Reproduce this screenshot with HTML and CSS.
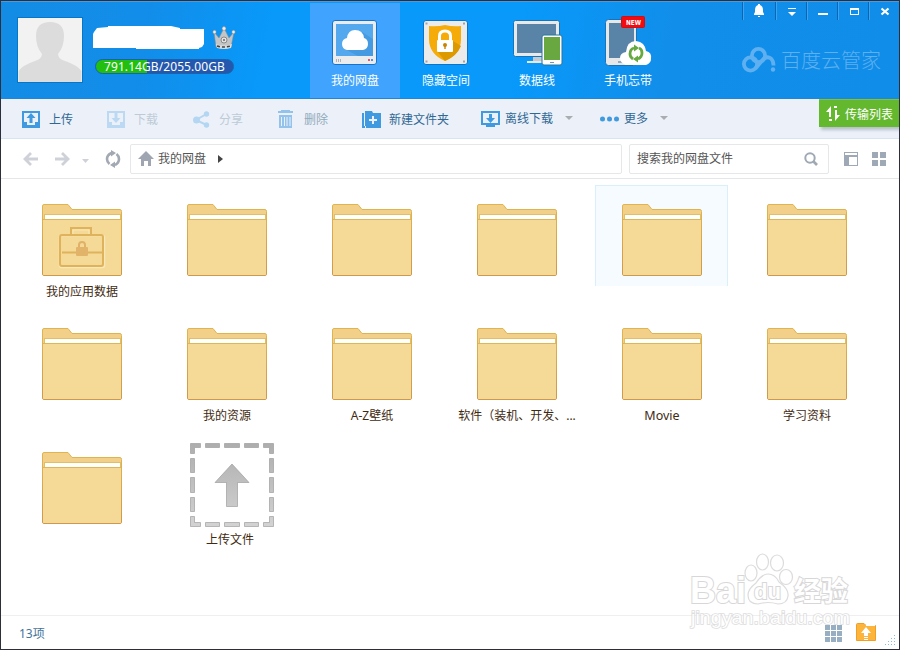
FILE: index.html
```html
<!DOCTYPE html>
<html lang="zh-CN">
<head>
<meta charset="utf-8">
<title>百度云管家</title>
<link rel="stylesheet" href="styles.css">
</head>
<body>
<svg class="defs" width="0" height="0" aria-hidden="true">
  <defs>
    <linearGradient id="edge" x1="0" y1="0" x2="0" y2="1"><stop offset="0" stop-color="#e0b54f"/><stop offset="1" stop-color="#cd994c"/></linearGradient>
    <linearGradient id="gray" gradientUnits="userSpaceOnUse" x1="0" y1="0" x2="0" y2="84"><stop offset="0" stop-color="#adadad"/><stop offset="1" stop-color="#d3d3d3"/></linearGradient>
    <symbol id="folder" viewBox="0 0 80 72">
      <path d="M.5 70V2Q.5.5 2 .5H26L30 5.500H78Q79.500 5.500 79.500 7.500V70Q79.500 71.500 78 71.500H2Q.5 71.500.5 70Z" fill="#f2d08a" stroke="url(#edge)"/>
      <path d="M1 16H79V70Q79 71 78 71H2Q1 71 1 70Z" fill="#f5d997"/>
      <rect x="2.500" y="10.500" width="76" height="5" fill="#fff" stroke="#e2bf66"/>
      <path d="M1 15.500H79" stroke="#dfb655"/>
    </symbol>
  </defs>
</svg>
<div class="window">
  <header class="header">
    <svg class="avatar" width="66" height="66" viewBox="0 0 66 66"><rect x=".5" y=".5" width="65" height="65" fill="#f2f2f2" stroke="#0876c6"/><path d="M1.500 65V54Q6 48 18 44Q25 42 25 37Q19 30 19 19Q19 5 33 5Q47 5 47 19Q47 30 41 37Q41 42 48 44Q60 48 64.500 54V65Z" fill="#dcdcdc"/></svg>
    <div class="account">
      <div class="name-row">
        <svg width="112" height="24" viewBox="0 0 112 24"><path d="M1 6L4 2L15 1V0H78L87 2V3H111V18L109 21L106 22V23H43V22H0V8Z" fill="#fff"/></svg>
        <svg class="crown" width="24" height="24" viewBox="0 0 24 24"><path d="M2 6L7 12L12 2L17 12L22 6L19 21Q12 24 4 21Z" fill="#c3c5c7" stroke="#8a8a8a" stroke-width=".5"/><path d="M4 18Q12 21 20 18L19 22Q12 24 5 22Z" fill="#ddd"/><path d="M5 20Q12 22 19 20" stroke="#444" stroke-dasharray="3 2" stroke-width="1.500" fill="none"/><circle cx="12" cy="14" r="3" fill="#e4e4e4" stroke="#777" stroke-width=".8"/><circle cx="12" cy="14" r="1" fill="#666"/><g fill="#eee" stroke="#888" stroke-width=".5"><circle cx="2.500" cy="6" r="1.700"/><circle cx="12" cy="2.500" r="1.900"/><circle cx="21.500" cy="6" r="1.700"/></g></svg>
      </div>
      <div class="quota">791.14GB/2055.00GB</div>
    </div>
    <nav class="tabs">
      <div class="tab active">
        <svg width="60" height="54" viewBox="0 0 60 54"><rect x="7.500" y="6.500" width="44" height="44" rx="2.500" fill="#eaecee" stroke="#1773c9"/><rect x="11" y="10" width="37" height="32" fill="#53a8ee"/><path d="M37 18L48 25V42H33L18 34Z" fill="#459ae2"/><path d="M22 36Q17 35 17 30Q17 25 22 24Q23 16 30 16Q38 16 39 24Q43 25 43 30Q43 35 38 36Z" fill="#fff"/><path d="M11.500 45V48M13.500 45V48M15.500 45V48" stroke="#b0b2b5"/><path d="M43 45H45V47H43Z" fill="#e8556c"/><path d="M46 45H48V47H46Z" fill="#4b97dc"/></svg>
        <span>我的网盘</span>
      </div>
      <div class="tab">
        <svg width="60" height="54" viewBox="0 0 60 54"><rect x="7.500" y="6.500" width="44" height="44" rx="2.500" fill="#ebebeb" stroke="#0a74cc"/><path d="M9.500 9.500h2M47 9.500h2M9.500 47.500h2M47 47.500h2" stroke="#a0a4a8" stroke-width="2"/><g transform="translate(-1)"><path d="M14 12Q22 13 30 11Q38 13 46 12V25Q46 40 30 47Q14 40 14 25Z" fill="#f5ab08"/><path d="M38 27L46 32Q42 42 30 47L22 37Z" fill="#dd9900"/><path d="M24.500 27V22Q24.500 17 30 17Q35.500 17 35.500 22V27" fill="none" stroke="#fff" stroke-width="3"/><rect x="22" y="26" width="16" height="12" rx="1" fill="#fff"/><circle cx="30" cy="31" r="2" fill="#c98500"/><path d="M29.300 31h1.400v4h-1.400Z" fill="#c98500"/></g></svg>
        <span>隐藏空间</span>
      </div>
      <div class="tab">
        <svg width="60" height="54" viewBox="0 0 60 54"><g transform="translate(-1)"><path d="M27 42H38V47H43V49H21V47H27Z" fill="#c6cbd0"/><path d="M21 47H43V49H21Z" fill="#e8e8e8"/><rect x="7.500" y="6.500" width="46" height="36" rx="2" fill="#e8e9ea" stroke="#1674bd"/><rect x="11" y="10" width="39" height="29" fill="#5984a8"/><rect x="36" y="21" width="20" height="30" rx="2" fill="#fff" stroke="#26769d"/><rect x="38" y="23" width="16" height="23" fill="#69a840"/><path d="M44 48.500h4" stroke="#7197b5"/></g></svg>
        <span>数据线</span>
      </div>
      <div class="tab">
        <svg width="60" height="54" viewBox="0 0 60 54"><rect x="7.500" y="5.500" width="31" height="46" rx="3" fill="#e5e7e9" stroke="#1674bd"/><rect x="11" y="9" width="25" height="35" fill="#5984a8"/><path d="M20 48h5" stroke="#7197b5" stroke-width="1.500"/><path d="M28 51Q22 49 22 44Q22 39 28 38Q29 27 38 27Q47 28 48 37Q54 38 53 45Q53 49 48 51Z" fill="#fff"/><g fill="none" stroke="#65a940" stroke-width="2.800"><path d="M36 34Q32 35 32 40Q32 43 35 45"/><path d="M40 45Q44 43 44 39Q44 35 41 34"/></g><path d="M36 30.500L41 34L36 37.500ZM40 48.500L35 45L40 41.500Z" fill="#65a940"/><rect x="23.500" y="2.500" width="23" height="11" rx="1" fill="#f40b12" stroke="#cc1016"/><text x="35.500" y="10.500" text-anchor="middle" class="new" textLength="15" lengthAdjust="spacingAndGlyphs">NEW</text></svg>
        <span>手机忘带</span>
      </div>
    </nav>
    <div class="right">
      <div class="controls">
        <i><svg width="16" height="16" viewBox="0 0 16 16"><path d="M7 1H9V2Q12 3 12 7V9L13 11V12H3V11L4 9V7Q4 3 7 2ZM7 13H9V14H7Z"/></svg></i>
        <i><svg width="16" height="16" viewBox="0 0 16 16"><path d="M4 4H12V5H4ZM4 8H12L8 12Z"/></svg></i>
        <i><svg width="16" height="16" viewBox="0 0 16 16"><path d="M3 9H13V11H3Z"/></svg></i>
        <i><svg width="16" height="16" viewBox="0 0 16 16"><path fill-rule="evenodd" d="M4 4H13V11H4ZM5 6V10H12V6Z"/></svg></i>
        <i><svg width="16" height="16" viewBox="0 0 16 16"><path d="M4.500 4.500L11.500 10.500M11.500 4.500L4.500 10.500" stroke="#fff" stroke-width="2.200"/></svg></i>
      </div>
      <div class="brand">
        <svg width="34" height="26" viewBox="0 0 34 26" fill="none" stroke="#5eb0f0" stroke-width="3.800"><circle cx="8.500" cy="17" r="6.600"/><circle cx="16.500" cy="8.500" r="6.600"/><path d="M13.500 21.500L21 12.500Q25 8.500 29 11.500Q31.500 14 31.500 18.500"/><circle cx="31" cy="22.500" r="2.200" fill="#5eb0f0" stroke="none"/></svg>
        <span>百度云管家</span>
      </div>
    </div>
  </header>

  <div class="toolbar">
    <div class="tool t-upload"><svg width="18" height="17" viewBox="0 0 18 17" fill="#3f9adf"><path fill-rule="evenodd" d="M0 0H18V17H0ZM2 2V11H5V14H13V11H16V2Z"/><path d="M9 2L13.500 7H10.500V12H7.500V7H4.500Z"/></svg><span>上传</span></div>
    <div class="tool t-down off"><svg width="18" height="17" viewBox="0 0 18 17" fill="#bbd9f2"><path fill-rule="evenodd" d="M0 0H18V17H0ZM2 2V11H5V14H13V11H16V2Z"/><path d="M9 12L13.500 7H10.500V2H7.500V7H4.500Z"/></svg><span>下载</span></div>
    <div class="tool t-share off"><svg width="17" height="17" viewBox="0 0 17 17" fill="#b3d6f2"><path d="M13.500 3L3 9L13.500 14" fill="none" stroke="#b3d6f2" stroke-width="2"/><circle cx="3.500" cy="9" r="3.500"/><circle cx="13.500" cy="3" r="2.700"/><circle cx="13.500" cy="14" r="2.700"/></svg><span>分享</span></div>
    <div class="tool t-del dim"><svg width="15" height="18" viewBox="0 0 15 18" fill="#93c3eb"><path fill-rule="evenodd" d="M3 0H12V1H15V3H0V1H3ZM1 5H14V18H1ZM3 7V16H4V7ZM6 7V16H7V7ZM8.500 7V16H9.500V7ZM11.500 7V16H12.500V7Z"/></svg><span>删除</span></div>
    <div class="tool t-new"><svg width="19" height="17" viewBox="0 0 19 17" fill="#3f9adf"><path fill-rule="evenodd" d="M0 2H2V15H4V17H0ZM3 0H10L11 2H19V17H3ZM10 5V8H7V10H10V13H12V10H15V8H12V5Z"/></svg><span>新建文件夹</span></div>
    <div class="tool t-off"><svg width="19" height="17" viewBox="0 0 19 17" fill="#3f9adf"><path fill-rule="evenodd" d="M0 0H19V14H14V16H5V14H0ZM2 2V12H17V2Z"/><path d="M8 3H11V7H14L9.500 12L5 7H8Z"/></svg><span>离线下载</span><b class="caret"></b></div>
    <div class="tool t-more"><svg width="19" height="17" viewBox="0 0 19 17" fill="#3f9adf"><circle cx="2.500" cy="8" r="2.500"/><circle cx="9.500" cy="8" r="2.500"/><circle cx="16.500" cy="8" r="2.500"/></svg><span>更多</span><b class="caret"></b></div>
    <div class="transfer"><svg width="14" height="15" viewBox="0 0 14 15" fill="#fff"><path d="M5 0V11H3V6H0ZM9 15V4H11V9H14ZM3 13H6V15H3ZM8 0H11V2H8Z"/></svg><span>传输列表</span></div>
  </div>

  <div class="address">
    <svg class="nav" width="100" height="20" viewBox="0 0 100 20"><g fill="none" stroke="#cfd1d8" stroke-width="2.800"><path d="M2 10H15M8 4L2 10L8 16M32 10H45M39 4L45 10L39 16"/></g><path d="M59 10H66L62.500 14Z" fill="#cfd1d8"/><g fill="none" stroke="#a2a9b3" stroke-width="2.600"><path d="M88.500 4Q84 6 84 10Q84 13 86.500 15M92 16Q96 14 96 10Q96 7 93.500 5"/></g><path d="M88 1L93 4L88 7.500ZM92 19L87 16L92 12.500Z" fill="#a2a9b3"/></svg>
    <div class="path"><svg width="16" height="15" viewBox="0 0 16 15"><path d="M8 0L16 8H13V15H10V10H6V15H3V8H0Z" fill="#9fa6b1"/></svg><span>我的网盘</span><b class="arrow"></b></div>
    <div class="search"><span>搜索我的网盘文件</span><svg width="14" height="14" viewBox="0 0 14 14" fill="none" stroke="#9fa9b4" stroke-width="2"><circle cx="6" cy="6" r="4.700"/><path d="M9 9L13 13" stroke-width="2.600"/></svg></div>
    <svg class="views" width="44" height="14" viewBox="0 0 44 14" fill="#9fa9b5"><path fill-rule="evenodd" d="M0 0H14V14H0ZM1 1V3H13V1ZM5 5V13H13V5Z"/><path d="M28 0H34V6H28ZM36 0H42V6H36ZM28 8H34V14H28ZM36 8H42V14H36Z"/></svg>
  </div>

  <main class="files">
    <div class="file"><svg width="80" height="72" viewBox="0 0 80 72"><use href="#folder" width="80" height="72"/><g fill="none" stroke="#fae8b8" stroke-width="1.500"><rect x="17.500" y="31.500" width="45" height="32" rx="2"/></g><g fill="none" stroke="#dfb35c" stroke-width="2"><rect x="18" y="31" width="43" height="31" rx="2"/><path d="M29 31V24H49V31M20 48.500H60"/></g><path d="M31 30V26H47V30" fill="none" stroke="#fae8b8"/><path d="M37 44V41Q37 38 40 38Q43 38 43 41V44" fill="none" stroke="#dfb268" stroke-width="2"/><rect x="34" y="43" width="12" height="9" rx="1" fill="#e1b46a"/></svg><span>我的应用数据</span></div>
    <div class="file"><svg width="80" height="72"><use href="#folder"/></svg></div>
    <div class="file"><svg width="80" height="72"><use href="#folder"/></svg></div>
    <div class="file"><svg width="80" height="72"><use href="#folder"/></svg></div>
    <div class="file hover"><svg width="80" height="72"><use href="#folder"/></svg></div>
    <div class="file"><svg width="80" height="72"><use href="#folder"/></svg></div>
    <div class="file"><svg width="80" height="72"><use href="#folder"/></svg></div>
    <div class="file"><svg width="80" height="72"><use href="#folder"/></svg><span>我的资源</span></div>
    <div class="file"><svg width="80" height="72"><use href="#folder"/></svg><span>A-Z壁纸</span></div>
    <div class="file"><svg width="80" height="72"><use href="#folder"/></svg><span>软件（装机、开发、...</span></div>
    <div class="file"><svg width="80" height="72"><use href="#folder"/></svg><span class="latin">Movie</span></div>
    <div class="file"><svg width="80" height="72"><use href="#folder"/></svg><span>学习资料</span></div>
    <div class="file"><svg width="80" height="72"><use href="#folder"/></svg></div>
    <div class="file upload"><svg width="84" height="84" viewBox="0 0 84 84" fill="url(#gray)" stroke="#999" stroke-opacity=".65"><path d="M.5.5H10.500V4.500H4.500V10.500H.5ZM73.500.5H83.500V10.500H79.500V4.500H73.500ZM.5 73.500H4.500V79.500H10.500V83.500H.5ZM79.500 73.500H83.500V83.500H73.500V79.500H79.500ZM15.500.5h14v4h-14zM34.500.5h15v4h-15zM54.500.5h14v4h-14zM15.500 79.500h14v4h-14zM34.500 79.500h15v4h-15zM54.500 79.500h14v4h-14zM.5 15.500h4v14h-4zM.5 34.500h4v15h-4zM.5 54.500h4v14h-4zM79.500 15.500h4v14h-4zM79.500 34.500h4v15h-4zM79.500 54.500h4v14h-4zM42 21L59 39.500H47.500V63.500H36.500V39.500H25Z"/></svg><span>上传文件</span></div>
  </main>

  <footer class="footer">
    <span>13项</span>
    <svg class="status" width="72" height="22" viewBox="0 0 72 22"><path d="M0 2h5v5H0zM6 2h5v5H6zM12 2h5v5h-5zM0 8h5v5H0zM6 8h5v5H6zM12 8h5v5h-5zM0 14h5v5H0zM6 14h5v5H6zM12 14h5v5h-5z" fill="#98aec2"/><path d="M31.500 1.500Q31.500.5 32.500.5H39L41 2.500H50.500V17.500H31.500Z" fill="#fdb43b" stroke="#ef9f28"/><path d="M41 2.500H50" stroke="#fff"/><path d="M41 4L46 10H43V13H39V10H36ZM39 14H43V15H39ZM39 16H43V17H39Z" fill="#fff"/><path d="M69 12h1v1h-1zM66 15h1v1h-1zM69 15h1v1h-1zM63 18h1v1h-1zM66 18h1v1h-1zM69 18h1v1h-1zM60 21h1v1h-1zM63 21h1v1h-1zM66 21h1v1h-1zM69 21h1v1h-1z" fill="#86bde0"/></svg>
  </footer>
  <svg class="watermark" width="170" height="80" viewBox="0 0 170 80">
    <g fill="#fff" stroke="#d4d4d4" stroke-width="1.200"><ellipse cx="66" cy="23" rx="6" ry="8"/><ellipse cx="77.500" cy="12" rx="6" ry="8"/><ellipse cx="92" cy="13" rx="6.500" ry="8"/><ellipse cx="101" cy="27" rx="6.500" ry="7.500"/><path d="M83 24Q90 24 94 32Q104 39 103 46Q102 54 93 54Q83 51 73 54Q63 54 63 45Q63 39 71 33Q77 24 83 24Z"/></g>
    <g class="outline">
      <text x="5" y="53" font-size="36" textLength="56" lengthAdjust="spacingAndGlyphs">Bai</text>
      <text x="69" y="49" font-size="22" textLength="27" lengthAdjust="spacingAndGlyphs">du</text>
      <text x="109" y="51" font-size="27">经验</text>
      <text class="url" x="6" y="74" font-size="19" textLength="159" lengthAdjust="spacingAndGlyphs">jingyan.baidu.com</text>
    </g>
  </svg>
</div>
</body>
</html>
```
FILE: styles.css
```css
* { box-sizing: border-box; }
body { margin: 0; font: 12px/18px "Noto Sans", "Noto Sans CJK SC", sans-serif; color: #333; }
svg { display: block; flex: none; }
.defs { position: absolute; }
.window { position: relative; display: flex; flex-direction: column; width: 900px; height: 650px; border: 1px solid #2c2e3c; background: #fff; overflow: hidden; }

.header { display: flex; height: 98px; flex: none; border-top: 1px solid #459ce2; border-bottom: 1px solid #2485d2; background: linear-gradient(100deg, #138ce5 0, #128de9 16%, #0899fa 30%, #0899fa 57%, #118eea 74%, #108de8 100%); }
.avatar { margin: 15px 0 0 16px; }
.account { width: 227px; padding: 24px 0 0 10px; }
.name-row { display: flex; gap: 7px; }
.quota { width: 139px; height: 15px; margin: 9px 0 0 2px; border: 1px solid #1a62a9; border-radius: 8px; background: linear-gradient(90deg, #22bf10 0 37%, #2458ae 37%); color: #fff; font-size: 12px; line-height: 14px; text-align: center; letter-spacing: 0.08px; white-space: nowrap; }
.tabs { display: flex; gap: 1px; padding-top: 1px; }
.tab { display: flex; flex-direction: column; align-items: center; width: 90px; height: 95px; padding-top: 11px; color: #fff; }
.tab span { margin-top: 4px; }
.active { background: #40a4fe; }
.new { font: bold 7px "DejaVu Sans", sans-serif; fill: #fff; }
.right { display: flex; flex-direction: column; align-items: flex-end; flex: 1; }
.controls { display: flex; height: 18px; }
.controls i { display: flex; justify-content: center; width: 31px; padding: 2px 0 0 2px; border-left: 1px solid #0866b5; box-shadow: inset 1px 0 #3ba4f0; }
.controls i:first-child { width: 33px; padding: 1px 0 0; }
.controls svg { fill: #fff; }
.brand { display: flex; align-items: center; gap: 5px; margin: 25px 18px 0 0; height: 30px; color: #5eb0f0; font: 300 20px/28px "Noto Sans CJK SC", sans-serif; }

.toolbar { display: flex; height: 40px; flex: none; padding-left: 21px; border-bottom: 1px solid #d5e5f2; background: #ecf1f9; color: #306894; }
.tool { display: flex; align-items: center; gap: 9px; height: 40px; }
.tool span, .transfer span { padding-top: 2px; }
.t-down { margin-left: 34px; }
.t-share { margin-left: 35px; }
.t-del { margin-left: 35px; gap: 11px; }
.t-new { margin-left: 34px; gap: 8px; }
.t-off { margin-left: 32px; gap: 5px; }
.t-more { margin-left: 27px; gap: 5px; }
.t-off span, .t-more span { padding-top: 0; }
.off { color: #bdcbd7; }
.dim { color: #91aabd; }
.caret { margin: 0 0 2px 7px; border: 4px solid transparent; border-top-color: #a9adb2; border-bottom: 0; }
.transfer { display: flex; align-items: center; gap: 5px; width: 80px; height: 28px; margin-left: auto; padding-left: 7px; border-top: 1px solid #79c449; background: #64b82d; color: #fff; box-shadow: 2px 3px 3px #b8c1ca; white-space: nowrap; }

.address { display: flex; align-items: center; height: 40px; flex: none; padding-left: 22px; border-bottom: 1px solid #e5e6ea; color: #555; }
.path, .search { display: flex; align-items: center; height: 30px; border: 1px solid #e6e7e9; border-radius: 2px; }
.nav { margin-right: 7px; }
.path { width: 492px; padding-left: 7px; gap: 4px; }
.arrow { margin-left: 8px; border: 4px solid transparent; border-left: 5px solid #444; border-right: 0; }
.search { width: 200px; margin-left: 7px; padding: 0 10px 0 7px; justify-content: space-between; }
.views { margin-left: 15px; }

.files { display: grid; grid-template-columns: repeat(6, 133px); grid-auto-rows: 124px; column-gap: 12px; height: 436px; padding: 6px 0 0 14px; align-content: start; color: #3f2b12; }
.file { display: flex; flex-direction: column; align-items: center; padding-top: 19px; height: 124px; white-space: nowrap; }
.file span { margin: 7px 0 0 1px; }
.hover { height: 101px; padding-top: 18px; border: 1px solid #d9f0fa; border-bottom: 0; background: #f5fbff; }
.file .latin { font-size: 12.5px; }
.upload { padding-top: 10px; padding-left: 10px; }
.upload span { margin: 4px 3px 0 0; }

.footer { display: flex; justify-content: space-between; flex: 1; padding: 9px 2px 0 18px; border-top: 1px solid #efefef; color: #44749a; }
.status { margin-top: -2px; }
.watermark { position: absolute; left: 684px; top: 549px; opacity: .8; }
.outline { fill: #fff; stroke: #cecece; stroke-width: 2px; paint-order: stroke; font-family: "Liberation Sans", "Noto Sans CJK SC", sans-serif; font-weight: bold; }
.url { font-weight: normal; stroke: #d6d6d6; stroke-width: 1.6px; }
```
